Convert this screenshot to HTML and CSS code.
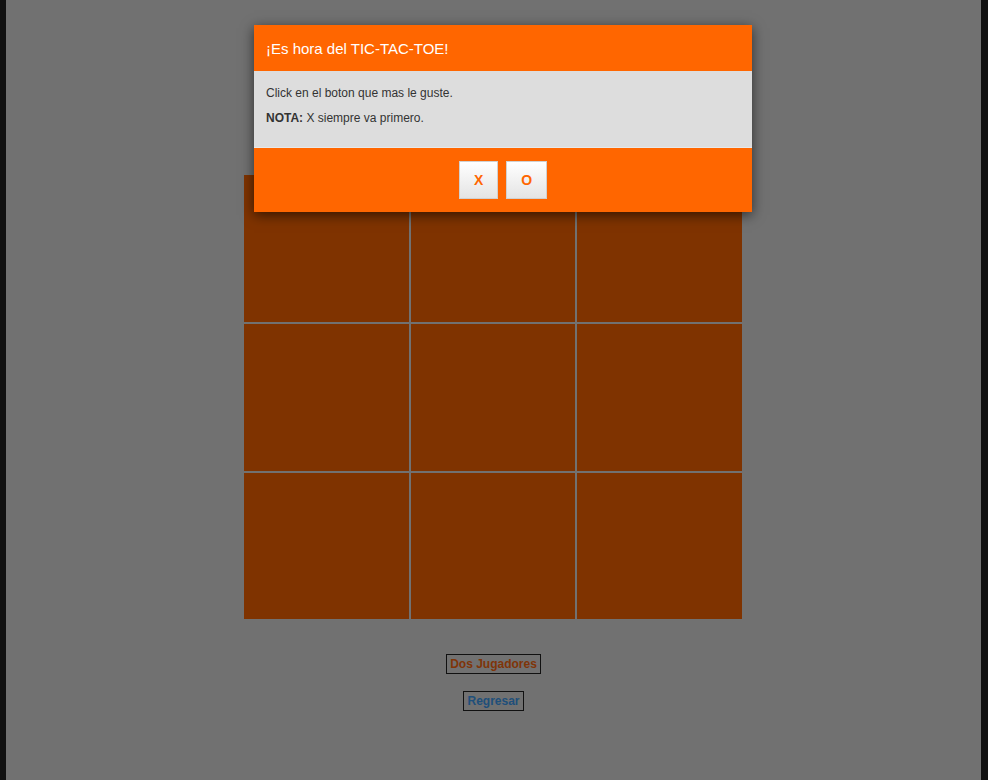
FILE: index.html
```html
<!DOCTYPE html>
<html lang="es">
<head>
<meta charset="utf-8">
<title>TIC-TAC-TOE</title>
<link rel="stylesheet" href="styles.css">
</head>
<body>
<div class="page">
  <div class="board">
    <div class="cell"></div><div class="cell"></div><div class="cell"></div>
    <div class="cell"></div><div class="cell"></div><div class="cell"></div>
    <div class="cell"></div><div class="cell"></div><div class="cell"></div>
  </div>
  <div class="links">
    <a class="link link-orange" href="#">Dos Jugadores</a>
    <a class="link link-blue" href="#">Regresar</a>
  </div>
</div>
<div class="overlay"></div>
<div class="modal">
  <div class="modal-header">¡Es hora del TIC-TAC-TOE!</div>
  <div class="modal-body">
    <p>Click en el boton que mas le guste.</p>
    <p><strong>NOTA:</strong> X siempre va primero.</p>
  </div>
  <div class="modal-footer">
    <button class="btn">X</button>
    <button class="btn">O</button>
  </div>
</div>
</body>
</html>
```
FILE: styles.css
```css
html, body {
  margin: 0;
  padding: 0;
}
body {
  background: #222;
  font-family: "Liberation Sans", Arial, sans-serif;
}
.page {
  width: 975px;
  margin: 0 0 0 6px;
  min-height: 780px;
  background: #e2e2e2;
  padding-top: 175px;
  box-sizing: border-box;
}
.board {
  width: 498px;
  height: 444px;
  margin: 0 0 0 238px;
  display: grid;
  grid-template-columns: 165px 164px 165px;
  grid-template-rows: 147px 147px 146px;
  gap: 2px;
}
.cell {
  background: #ff6600;
}
.links {
  display: flex;
  flex-direction: column;
  align-items: center;
  gap: 17px;
  margin-top: 35px;
}
.link {
  display: inline-block;
  font-size: 12px;
  font-weight: bold;
  line-height: 14px;
  padding: 2px 3px;
  border: 1px solid #222;
  text-decoration: none;
}
.link-orange {
  color: #ff6a10;
}
.link-blue {
  color: #3e9ef4;
}
.overlay {
  position: fixed;
  inset: 0;
  background: rgba(0, 0, 0, 0.5);
}
.modal {
  position: absolute;
  left: 254px;
  top: 25px;
  width: 498px;
  box-shadow: 0 3px 12px rgba(0, 0, 0, 0.6);
}
.modal-header {
  background: #ff6600;
  color: #fff;
  font-size: 15px;
  height: 46px;
  line-height: 47px;
  padding: 0 12px;
}
.modal-body {
  background: #dddddd;
  color: #333;
  font-size: 12px;
  line-height: 14px;
  padding: 15px 12px 22px;
}
.modal-body p {
  margin: 0 0 11px;
}
.modal-body p:last-child {
  margin-bottom: 0;
}
.modal-footer {
  background: #ff6600;
  border-top: 1px solid #e8e8e8;
  height: 64px;
  display: flex;
  justify-content: center;
  align-items: center;
  gap: 8px;
}
.btn {
  height: 38px;
  padding: 0 14px;
  border: 1px solid #d0d0d0;
  background: linear-gradient(#ffffff, #e4e4e4);
  color: #ff6600;
  font-family: "Liberation Sans", Arial, sans-serif;
  font-weight: bold;
  font-size: 14px;
  border-radius: 0;
}
```
